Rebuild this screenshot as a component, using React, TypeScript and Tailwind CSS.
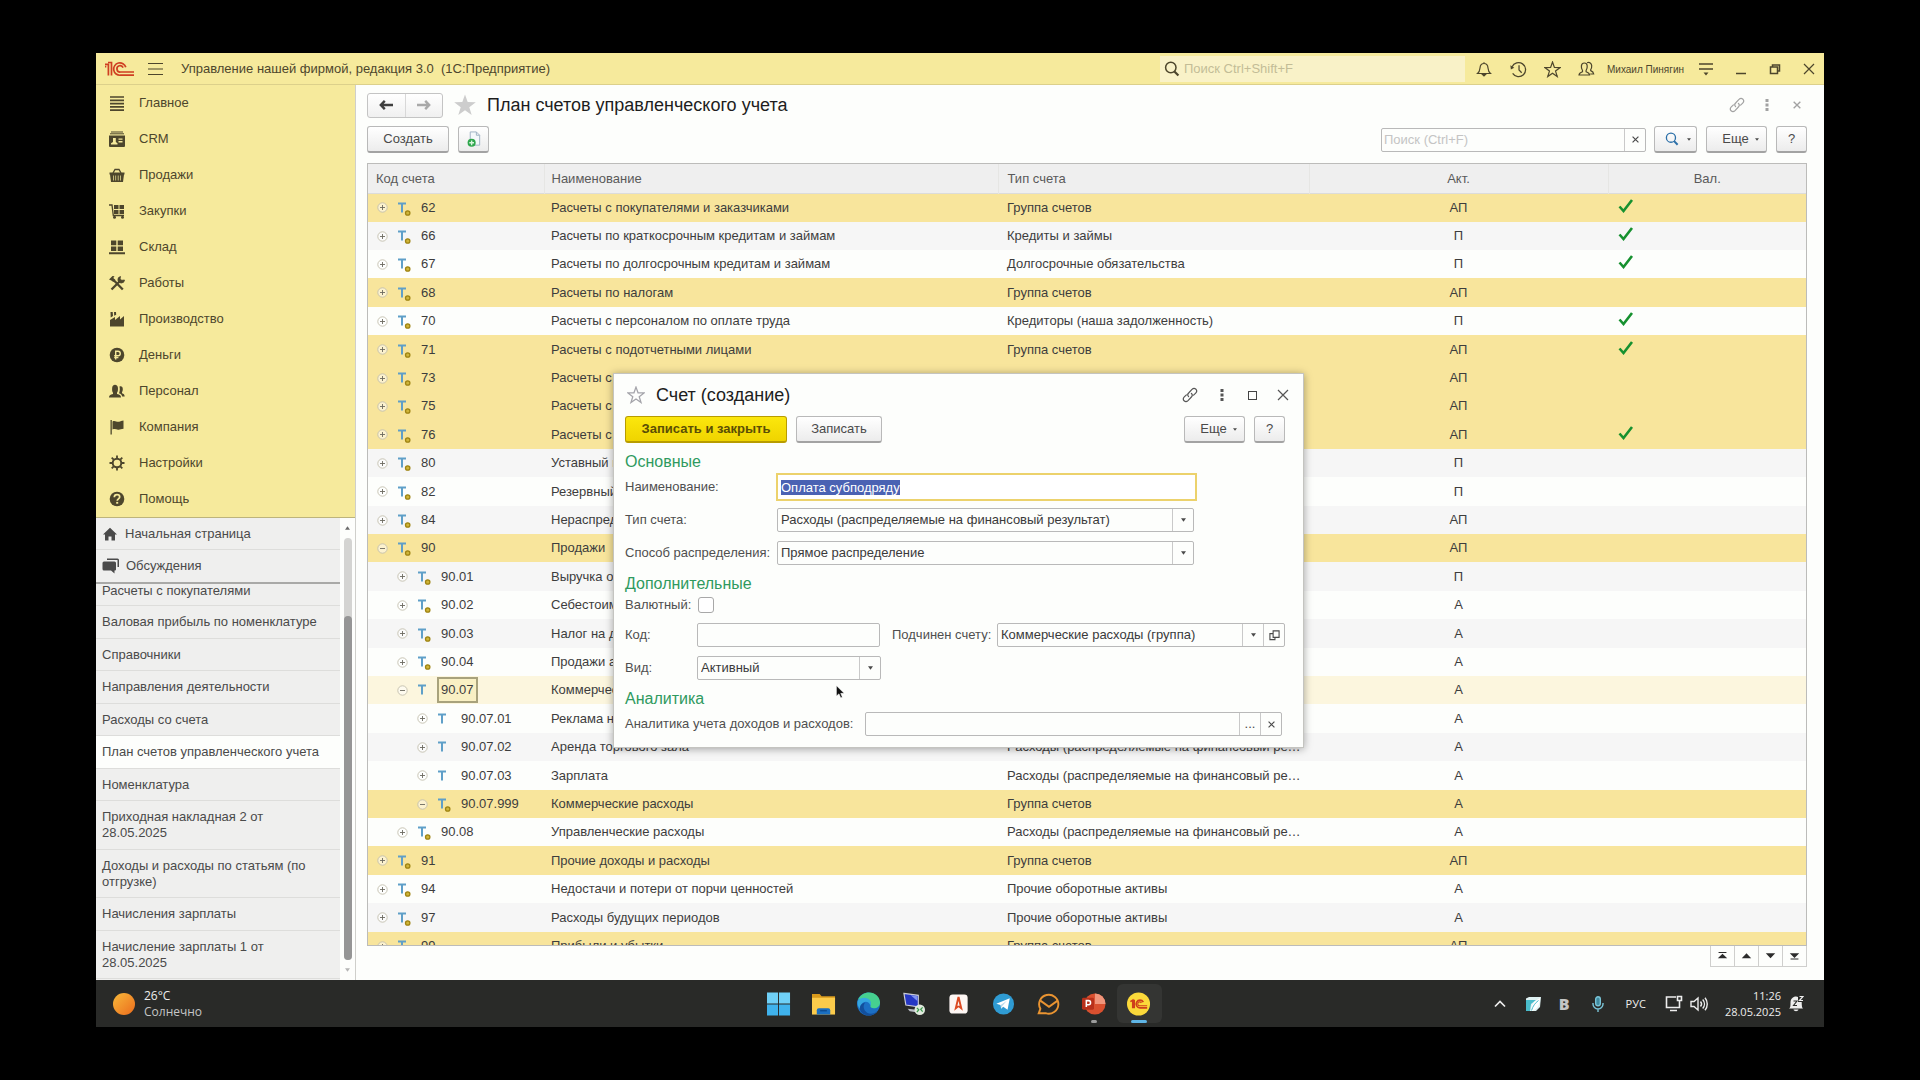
import { useEffect, useRef } from "react";
import type { ReactNode } from "react";

type IconProps = { className?: string };

/* ---------- shared drawings ---------- */

const Logo1C = ({ className }: IconProps) => (
  <svg viewBox="0 0 30 16" className={className} fill="none" stroke="currentColor" strokeWidth="1.7">
    <path d="M.5 3.400H3.900V14.500M.5 5.600H1.800V5.600M3.500 1.500H7V14.500" />
    <path d="M21.300 6.200A6.200 6.200 0 1 0 16 14.200H29.500" />
    <path d="M18.600 6.600A3.200 3.200 0 1 0 16 11H29.500" />
  </svg>
);

const Burger = ({ className }: IconProps) => (
  <svg viewBox="0 0 16 14" className={className} stroke="currentColor" strokeWidth="1.2">
    <path d="M0 1.5h15M0 7h15M0 12.5h15" />
  </svg>
);

const Magnifier = ({ className }: IconProps) => (
  <svg viewBox="0 0 16 16" className={className} fill="none" stroke="currentColor" strokeWidth="1.5">
    <circle cx="6.8" cy="6.5" r="5.2" />
    <path d="m10.4 10.4 4 4.2" strokeWidth="2.2" />
  </svg>
);

const LinkIcon = ({ className }: IconProps) => (
  <svg viewBox="0 0 16 16" className={className} fill="none" stroke="currentColor" strokeWidth="1.2" strokeLinecap="round">
    <path d="M6.6 9.6C5.4 8.4 5.6 7 6.6 6L10 2.4c1.2-1.2 2.8-1.2 3.9-.2 1 1.1 1 2.7-.2 3.9L11.6 8.2" />
    <path d="M9.4 6.4c1.2 1.2 1 2.6 0 3.6L6 13.6c-1.2 1.2-2.800 1.200-3.900.2-1-1.100-1-2.700.2-3.900L4.400 7.800" />
  </svg>
);

const Dots = ({ className }: IconProps) => (
  <svg viewBox="0 0 4 14" className={className} fill="currentColor">
    <rect x="0.5" y="1" width="3" height="3" />
    <rect x="0.5" y="5.5" width="3" height="3" />
    <rect x="0.5" y="10" width="3" height="3" />
  </svg>
);

const Cross = ({ className }: IconProps) => (
  <svg viewBox="0 0 12 12" className={className} stroke="currentColor" strokeWidth="1.2">
    <path d="m1 1 10 10M11 1 1 11" />
  </svg>
);

const StarShape = ({ className, filled }: IconProps & { filled?: boolean }) => (
  <svg viewBox="0 0 24 24" className={className} fill={filled ? "currentColor" : "none"} stroke="currentColor" strokeWidth={filled ? 0 : 1.7}>
    <path d="m12 1.500 2.700 7.600 8.100.2-6.500 4.900 2.400 7.800L12 17.300l-6.700 4.700 2.400-7.800L1.200 9.300l8.100-.2z" />
  </svg>
);

const Caret = ({ className }: IconProps) => (
  <svg viewBox="0 0 6 4" className={className} fill="currentColor">
    <path d="M0 0h6L3 4z" />
  </svg>
);

const Arrow = ({ className }: IconProps) => (
  <svg viewBox="0 0 14 10" className={className} fill="none" stroke="currentColor" strokeWidth="2.4">
    <path d="M2 5H14M5.8.8 1.800 5l4 4.200" />
  </svg>
);

/* ---------- section icons ---------- */

const sectionIcons: Record<string, ReactNode> = {
  main: <path d="M1 2h14M1 5.300h14M1 8.600h14M1 11.900h14M1 15.200h14" stroke="currentColor" strokeWidth="1.7" />,
  crm: (
    <>
      <path d="M2 1h12M1 2.800h14" stroke="currentColor" strokeWidth="1" />
      <path fillRule="evenodd" d="M0 4.500h16V15a1 1 0 0 1-1 1H1a1 1 0 0 1-1-1zM2 13.500h6.500v-1.300L6.800 11V7h-2.800V11L2 12.200zM9.500 7.500v1.300h4V7.500zm0 2.600v1.300h4v-1.300z" />
    </>
  ),
  sales: (
    <>
      <path d="M4 6 6 2.500h4L12 6" fill="none" stroke="currentColor" strokeWidth="1.3" />
      <path fillRule="evenodd" d="M.5 5.500h15v2H15l-1 7.500H2L1 7.500H.5zM4 8.500v5h.7v-5zm2.400 0v5h.7v-5zm2.400 0v5h.7v-5zm2.400 0v5h.7v-5z" />
    </>
  ),
  purchases: (
    <>
      <path d="M0 2h3l1.300 10.500H15" fill="none" stroke="currentColor" strokeWidth="1.3" />
      <path d="M5 2h4.500v4H5zM10.500 2H15v4h-4.500zM5 7h4.500v4H5zM10.500 7H15v4h-4.500z" />
      <circle cx="5.5" cy="14.3" r="1.5" />
      <circle cx="13.5" cy="14.3" r="1.5" />
    </>
  ),
  stock: <path d="M2 1.500h5.300v4.800H2zM8.700 1.500H14v4.800H8.700zM2 7.500h5.300v4.500H2zM8.700 7.500H14v4.500H8.700zM0 13.300h16v2H0z" />,
  works: (
    <>
      <path d="m2.500 14.500 8-8M13.800 14.500 4.500 5" fill="none" stroke="currentColor" strokeWidth="2.3" />
      <path d="M0 4.500 3.500 1l2 .2L4.300 3l2.200 2-2.200 2-2-1.500z" />
      <path d="M15.500 5a3.300 3.300 0 1 1-4-3.500L11 4l1.800 1.300z" stroke="currentColor" strokeWidth="0.8" />
    </>
  ),
  production: <path d="M1 15.500V9l5-3v3l5-4v3.500l4-3.500v10.500zM1.500 1h2.200l.3 4-2.300 1.500zM5 1h2l.2 2.800-2 1z" />,
  money: (
    <>
      <circle cx="8" cy="8" r="7.3" />
      <path d="M6.700 12.500v-8.300h2.300a2.200 2.200 0 0 1 0 4.500H5.200M5.200 10.600h4.200" fill="none" stroke="#f6ea9c" strokeWidth="1.4" />
    </>
  ),
  people: (
    <>
      <path d="M0 14.500c0-2 1-2.700 4-3.500V9.800C3 8.500 3 6.500 3.200 4.500 3.500 2.500 4.600 1.700 6 1.700s2.600.8 2.900 2.800c.2 2 .1 4-.9 5.300V11c3 .8 4 1.500 4 3.500z" />
      <path d="M10.500 3.500c1.800-.8 3.300.2 3.300 2.500 0 1.500-.3 2.500-.8 3.200v1c1.700.6 2.500 1.300 2.700 3.300h-2.500c-.3-1.700-1.200-2.700-3.200-3.300.8-1.500 1.100-4.200.5-6.700z" />
    </>
  ),
  company: <path d="M1.500 1h1.300v14.500H1.500zM3.500 2.500C6 1 7.500 3.300 10 2.700c1.500-.2 2.500-1 4.500-1.200v8.300c-2.500 0-3.500 1.200-5.500.9-2-.4-3.300-1.300-5.500-.2z" />,
  settings: (
    <>
      <circle cx="8" cy="8" r="4.3" fill="none" stroke="currentColor" strokeWidth="2" />
      <path d="M8 .5v3M8 12.500v3M.5 8h3M12.500 8h3M2.700 2.700l2 2M11.300 11.300l2 2M13.300 2.700l-2 2M4.700 11.300l-2 2" stroke="currentColor" strokeWidth="1.8" />
    </>
  ),
  help: (
    <>
      <circle cx="8" cy="8" r="7.3" />
      <path d="M5.300 6.200C5.300 4.500 6.500 3.700 8 3.700s2.700.9 2.700 2.300c0 1.800-2.500 1.900-2.500 3.700" fill="none" stroke="#f6ea9c" strokeWidth="1.7" />
      <path d="M7.200 10.900h2v1.800h-2z" fill="#f6ea9c" />
    </>
  ),
};

const sections: [string, string][] = [
  ["main", "Главное"],
  ["crm", "CRM"],
  ["sales", "Продажи"],
  ["purchases", "Закупки"],
  ["stock", "Склад"],
  ["works", "Работы"],
  ["production", "Производство"],
  ["money", "Деньги"],
  ["people", "Персонал"],
  ["company", "Компания"],
  ["settings", "Настройки"],
  ["help", "Помощь"],
];

const openPages = [
  "Валовая прибыль по номенклатуре",
  "Справочники",
  "Направления деятельности",
  "Расходы со счета",
  "План счетов управленческого учета",
  "Номенклатура",
  "Приходная накладная 2 от 28.05.2025",
  "Доходы и расходы по статьям (по отгрузке)",
  "Начисления зарплаты",
  "Начисление зарплаты 1 от 28.05.2025",
];

/* ---------- accounts ---------- */

type Account = {
  code: string;
  name: string;
  type: string;
  act: string;
  level?: 1 | 2;
  group?: boolean;
  currency?: boolean;
  open?: boolean;
  custom?: boolean;
};

const GROUP = "Группа счетов";
const COSTS = "Расходы (распределяемые на финансовый результат)";

const accounts: Account[] = [
  { code: "62", name: "Расчеты с покупателями и заказчиками", type: GROUP, act: "АП", group: true, currency: true },
  { code: "66", name: "Расчеты по краткосрочным кредитам и займам", type: "Кредиты и займы", act: "П", currency: true },
  { code: "67", name: "Расчеты по долгосрочным кредитам и займам", type: "Долгосрочные обязательства", act: "П", currency: true },
  { code: "68", name: "Расчеты по налогам", type: GROUP, act: "АП", group: true },
  { code: "70", name: "Расчеты с персоналом по оплате труда", type: "Кредиторы (наша задолженность)", act: "П", currency: true },
  { code: "71", name: "Расчеты с подотчетными лицами", type: GROUP, act: "АП", group: true, currency: true },
  { code: "73", name: "Расчеты с персоналом", type: GROUP, act: "АП", group: true },
  { code: "75", name: "Расчеты с учредителями", type: GROUP, act: "АП", group: true },
  { code: "76", name: "Расчеты с дебиторами", type: GROUP, act: "АП", group: true, currency: true },
  { code: "80", name: "Уставный капитал", type: "Капитал", act: "П" },
  { code: "82", name: "Резервный капитал", type: "Капитал", act: "П" },
  { code: "84", name: "Нераспределенная прибыль", type: "Капитал", act: "АП" },
  { code: "90", name: "Продажи", type: GROUP, act: "АП", group: true, open: true },
  { code: "90.01", name: "Выручка от продаж", type: "Доходы", act: "П", level: 1 },
  { code: "90.02", name: "Себестоимость", type: "Расходы", act: "А", level: 1 },
  { code: "90.03", name: "Налог на доходы", type: "Расходы", act: "А", level: 1 },
  { code: "90.04", name: "Продажи акций", type: "Расходы", act: "А", level: 1 },
  { code: "90.07", name: "Коммерческие расходы", type: GROUP, act: "А", level: 1, open: true, custom: true },
  { code: "90.07.01", name: "Реклама н", type: COSTS, act: "А", level: 2, custom: true },
  { code: "90.07.02", name: "Аренда торгового зала", type: COSTS, act: "А", level: 2, custom: true },
  { code: "90.07.03", name: "Зарплата", type: COSTS, act: "А", level: 2, custom: true },
  { code: "90.07.999", name: "Коммерческие расходы", type: GROUP, act: "А", level: 2, group: true, open: true },
  { code: "90.08", name: "Управленческие расходы", type: COSTS, act: "А", level: 1 },
  { code: "91", name: "Прочие доходы и расходы", type: GROUP, act: "АП", group: true },
  { code: "94", name: "Недостачи и потери от порчи ценностей", type: "Прочие оборотные активы", act: "А" },
  { code: "97", name: "Расходы будущих периодов", type: "Прочие оборотные активы", act: "А" },
  { code: "99", name: "Прибыли и убытки", type: GROUP, act: "АП", group: true },
];

const SELECTED = "90.07";

const rowColor = (a: Account, i: number) => {
  if (a.code === SELECTED) return "bg-[#fcf6de]";
  if (a.group) return "bg-[#f8e59c]";
  return i % 2 ? "bg-[#f6f6f6]" : "bg-[#fdfefc]";
};

const indent = (level?: 1 | 2) => (level === 2 ? "pl-[49px]" : level === 1 ? "pl-[29px]" : "pl-[9px]");

const Toggle = ({ open }: { open?: boolean }) => (
  <svg viewBox="0 0 11 11" className="size-[11px] shrink-0" fill="#ffffff80" stroke="#c3bfae" strokeWidth="0.9">
    <circle cx="5.5" cy="5.5" r="4.7" />
    <path d={open ? "M3 5.500h5" : "M3 5.500h5M5.500 3v5"} stroke="#6c6a60" />
  </svg>
);

const AccountMark = ({ custom }: { custom?: boolean }) => (
  <svg viewBox="0 0 14 16" className="ml-[10px] h-4 w-3.5 shrink-0" fill="none">
    <path d="M0 3.500h8M4 3.500V12.500" stroke="#5f9fc8" strokeWidth="2" />
    {!custom && <circle cx="9.7" cy="13" r="2.2" fill="#d0b53a" stroke="#9f8412" strokeWidth="1.3" />}
  </svg>
);

/* ---------- controls ---------- */

const buttonBase =
  "flex items-center justify-center rounded-[3px] border border-[#b9b9b9] border-b-2 border-b-[#a3a3a3] bg-linear-to-b from-white to-[#ececec] text-[#4a4a4a]";

const Button = ({ className = "", label, children }: { className?: string; label?: string; children: ReactNode }) => (
  <button type="button" aria-label={label} className={`${buttonBase} ${className}`}>
    {children}
  </button>
);

const fieldBox = "flex h-6 rounded-[2px] border border-[#b9b9b9] bg-[#fdfefc]";
const addon = "flex w-[21px] shrink-0 items-center justify-center border-l border-[#c9c9c9] text-[#4a4a4a]";

const SelectField = ({ id, value, className = "", extra }: { id: string; value: string; className?: string; extra?: ReactNode }) => (
  <div className={`${fieldBox} ${className}`}>
    <select id={id} defaultValue={value} className="min-w-0 flex-1 appearance-none bg-transparent pl-[3px] text-[#3a3a3a] outline-none">
      <option>{value}</option>
    </select>
    <span className={addon}>
      <Caret className="h-1 w-[5px]" />
    </span>
    {extra}
  </div>
);

/* ---------- page parts ---------- */

const TitleBar = () => (
  <header className="flex h-8 shrink-0 items-center border-b border-[#dcd08b] bg-[#f6ea9c] pt-px text-[#4d462c]">
    <Logo1C className="ml-2 h-4 w-[31px] text-[#cf3f22]" />
    <button type="button" aria-label="Меню" className="ml-[13px]">
      <Burger className="h-3.5 w-4" />
    </button>
    <h1 className="ml-[17px] text-[13px] whitespace-pre">Управление нашей фирмой, редакция 3.0  (1С:Предприятие)</h1>
    <label className="ml-auto flex h-[26px] w-[305px] items-center bg-[#f9f2c8] pl-1">
      <Magnifier className="size-4 shrink-0" />
      <input aria-label="Поиск" placeholder="Поиск Ctrl+Shift+F" className="ml-1 min-w-0 flex-1 bg-transparent text-[13px] outline-none placeholder:text-[#c3bd97]" />
    </label>
    <div className="ml-[11px] flex items-center">
      <button type="button" aria-label="Уведомления">
        <svg viewBox="0 0 16 16" className="size-4" fill="none" stroke="currentColor" strokeWidth="1.2">
          <path d="M8 1.300V2.500M1.500 12.500h13c-2-1.500-2.300-3-2.500-5.500C11.800 4 10.300 2.500 8 2.500S4.200 4 4 7c-.2 2.500-.5 4-2.500 5.500z" />
          <path d="M6.300 13.300h3.400L8 15z" fill="currentColor" />
        </svg>
      </button>
      <button type="button" aria-label="История" className="ml-[18px]">
        <svg viewBox="0 0 16 16" className="size-[17px]" fill="none" stroke="currentColor" strokeWidth="1.2">
          <path d="M2 5.500A6.600 6.600 0 1 1 2.500 11.700M8.500 4v4.500L11 11" />
          <path d="M.3 4 4 6.300.8 8z" fill="currentColor" stroke="none" />
        </svg>
      </button>
      <button type="button" aria-label="Избранное" className="ml-[17px]">
        <StarShape className="size-[17px]" />
      </button>
      <button type="button" aria-label="Пользователь" className="ml-[17px] flex items-center gap-3 text-[10px]">
        <svg viewBox="0 0 17 16" className="h-4 w-[17px]" fill="none" stroke="currentColor" strokeWidth="1.2">
          <path d="M1 14c.2-2 1.500-2.500 3.500-3.200V9.500C3.500 8 3.200 6.500 3.400 4.800 3.700 3 4.700 2 6.300 2s2.700 1 2.900 2.800c.2 1.700-.1 3.200-1.100 4.700v1.300c2 .7 3.300 1.200 3.500 3.200z" />
          <path d="M9 1.800c2.600-1 4.500.3 4.700 2.800.1 1.700-.2 3-1 4v1c1.800.7 2.800 1.400 3 3.400h-3.500" />
        </svg>
        Михаил Пинягин
      </button>
      <button type="button" aria-label="Настройка панели" className="ml-3.5">
        <svg viewBox="0 0 16 16" className="size-4" stroke="currentColor" strokeWidth="1.3">
          <path d="M1 3h14M1 8h14" />
          <path d="M5.500 11.500h5L8 14.500z" fill="currentColor" stroke="none" />
        </svg>
      </button>
      <button type="button" aria-label="Свернуть" className="ml-[22px]">
        <svg viewBox="0 0 10 12" className="h-3 w-2.5" stroke="currentColor" strokeWidth="1.5">
          <path d="M0 10.500h10" />
        </svg>
      </button>
      <button type="button" aria-label="Развернуть" className="ml-[23px]">
        <svg viewBox="0 0 12 12" className="size-3" fill="none" stroke="currentColor" strokeWidth="1.5">
          <path d="M3.500 4V2h7v6H8.500M1.500 4h7v6.500h-7z" />
        </svg>
      </button>
      <button type="button" aria-label="Закрыть" className="mr-[9px] ml-[22px]">
        <Cross className="size-3" />
      </button>
    </div>
  </header>
);

const Sidebar = () => (
  <aside className="flex w-[260px] shrink-0 flex-col border-r border-[#cfcfcb] bg-[#fdfefc]">
    <nav aria-label="Разделы" className="bg-[#f6ea9c] text-[#4d462c]">
      {sections.map(([icon, label]) => (
        <a key={icon} href="#" className="flex h-9 items-center gap-[14px] pl-[13px] text-[13px]">
          <svg viewBox="0 0 16 16" className="size-4" fill="currentColor">
            {sectionIcons[icon]}
          </svg>
          {label}
        </a>
      ))}
    </nav>
    <div className="flex min-h-0 flex-1 border-t border-[#bdb47c] text-[13px] text-[#4a4a4a]">
      <nav aria-label="Открытые страницы" className="flex min-h-0 flex-1 flex-col bg-[#efefee]">
        <a href="#" className="flex h-8 shrink-0 items-center gap-2 border-b border-[#dddddb] pl-[7px]">
          <svg viewBox="0 0 14 14" className="size-3.5" fill="currentColor">
            <path d="M7 .8 14 7.500h-2V13.500H8.500V9.500h-3v4H2V7.500H0z" />
          </svg>
          Начальная страница
        </a>
        <a href="#" className="flex h-[34px] shrink-0 items-center gap-1.5 border-b-2 border-[#a9a9a7] pl-[6px]">
          <svg viewBox="0 0 18 16" className="h-4 w-[18px]" fill="currentColor">
            <path d="M5 .5h10.500a1.500 1.500 0 0 1 1.500 1.500v7h-1.500V2H5z" />
            <path d="M2 3.500h10.500A1.500 1.500 0 0 1 14 5v6.500a1 1 0 0 1-1 1h-.5V15.500l-3.500-3H2a1.500 1.500 0 0 1-1.500-1.500V5A1.500 1.500 0 0 1 2 3.500z" />
          </svg>
          Обсуждения
        </a>
        <div className="min-h-0 flex-1 overflow-hidden leading-4">
          <a href="#" className="block h-[22px] border-b border-[#dddddb] pl-[6px] leading-3.5">
            Расчеты с покупателями
          </a>
          {openPages.map((page) => (
            <a
              key={page}
              href="#"
              className={`block border-b border-[#dddddb] py-2 pr-3 pl-[6px] odd:pb-[7px] ${
                page === "План счетов управленческого учета" ? "bg-[#fdfefc]" : ""
              }`}
            >
              {page}
            </a>
          ))}
        </div>
      </nav>
      <div className="flex w-[15px] flex-col items-center justify-between py-2 text-[#6a6a6a]">
        <Caret className="h-1 w-[5px] rotate-180" />
        <div className="mt-2 flex w-2 flex-1 flex-col rounded-full bg-[#d4d4d2] pt-[78px]">
          <div className="flex-1 rounded-full bg-[#959595]" />
        </div>
        <Caret className="mt-2 h-1 w-[5px] text-[#b5b5b5]" />
      </div>
    </div>
  </aside>
);

const headCell = "border-r border-[#e6e6e4] font-normal";

const AccountsTable = () => (
  <div className="min-h-0 flex-1 overflow-hidden border border-[#bcbcba]">
    <table className="w-full table-fixed border-collapse text-[13px] text-[#3d3d3d]">
      <colgroup>
        <col className="w-[176px]" />
        <col />
        <col className="w-[311px]" />
        <col className="w-[299px]" />
        <col className="w-[198px]" />
      </colgroup>
      <thead>
        <tr className="h-[29px] border-b border-[#dcdcda] bg-[#efefef] text-left text-[#5a5a5a]">
          <th className={`${headCell} pl-2`}>Код счета</th>
          <th className={`${headCell} pl-[7px]`}>Наименование</th>
          <th className={`${headCell} pl-[9px]`}>Тип счета</th>
          <th className={`${headCell} text-center`}>Акт.</th>
          <th className="text-center font-normal">Вал.</th>
        </tr>
      </thead>
      <tbody>
        {accounts.map((a, i) => (
          <tr key={a.code} className={`h-7 nth-[5n+1]:h-[29px] nth-[5n+4]:h-[29px] ${rowColor(a, i)}`}>
            <td className="p-0">
              <div className={`flex items-center ${indent(a.level)}`}>
                <Toggle open={a.open} />
                <AccountMark custom={a.custom} />
                {a.code === SELECTED ? (
                  <span className="ml-[5px] flex h-[26px] items-center border-2 border-[#a8a27c] bg-[#f9f0c4] px-[2px]">{a.code}</span>
                ) : (
                  <span className="ml-[9px]">{a.code}</span>
                )}
              </div>
            </td>
            <td className="truncate py-0 pr-2 pl-[7px]">{a.name}</td>
            <td className="truncate py-0 pr-2 pl-[9px]">{a.type}</td>
            <td className="p-0 text-center">{a.act}</td>
            <td className="p-0">
              {a.currency && (
                <svg viewBox="0 0 16 14" className="mb-1 ml-[10px] h-3.5 w-4" fill="none" stroke="#16912f" strokeWidth="2.6">
                  <path d="m1.500 7.500 4 4.500L14 1" />
                </svg>
              )}
            </td>
          </tr>
        ))}
      </tbody>
    </table>
  </div>
);

const navPaths: [string, string][] = [
  ["В начало", "M2 0h10v1.200H2zM7 2l6 6H1z"],
  ["Вверх", "M7 1.500 13 8H1z"],
  ["Вниз", "M1 1.500h12L7 8z"],
  ["В конец", "M1 1.500h12L7 7.500zM2 8.300h10v1.200H2z"],
];

const heading = "text-base leading-5 text-[#2f9a5f]";

const AccountDialog = () => {
  const nameRef = useRef<HTMLInputElement>(null);
  useEffect(() => {
    nameRef.current?.focus();
    nameRef.current?.select();
  }, []);

  return (
    <section
      role="dialog"
      aria-labelledby="dialog-title"
      className="absolute top-[288px] left-[257px] w-[691px] border border-[#c4c4c0] bg-[#fdfefc] pb-[11px] pl-[11px] text-[13px] text-[#4f4f4f] shadow-[0_1px_8px_rgba(0,0,0,0.35)]"
    >
      <div className="flex h-[42px] items-center pr-[14px] text-[#555]">
        <StarShape className="ml-0.5 size-[18px] text-[#a4a4aa]" />
        <h2 id="dialog-title" className="ml-[11px] text-lg text-[#1d1d1d]">
          Счет (создание)
        </h2>
        <button type="button" aria-label="Ссылка" className="ml-auto">
          <LinkIcon className="size-4" />
        </button>
        <button type="button" aria-label="Действия" className="ml-[22px]">
          <Dots className="h-3.5 w-1" />
        </button>
        <button type="button" aria-label="Развернуть" className="ml-6 size-[9px] border border-[#444]" />
        <button type="button" aria-label="Закрыть" className="ml-5">
          <Cross className="size-3" />
        </button>
      </div>
      <div className="flex gap-[9px] pr-[18px]">
        <button
          type="button"
          className="flex h-[27px] w-[162px] items-center justify-center rounded-[3px] border border-b-2 border-[#b89c00] bg-linear-to-b from-[#fbe70d] to-[#efd400] font-bold text-[#5a4e05]"
        >
          Записать и закрыть
        </button>
        <Button className="h-[27px] w-[86px]">Записать</Button>
        <Button className="ml-auto h-[27px] w-[61px] gap-1.5 pl-2">
          Еще <Caret className="h-[3px] w-1" />
        </Button>
        <Button className="h-[27px] w-[31px]">?</Button>
      </div>

      <h3 className={`mt-[9px] ${heading}`}>Основные</h3>
      <div className="mt-px flex items-center">
        <label htmlFor="f-name" className="w-[151px]">
          Наименование:
        </label>
        <input
          ref={nameRef}
          id="f-name"
          defaultValue="Оплата субподряду"
          className="h-7 w-[421px] border-2 border-[#ecd26c] bg-white pl-[3px] text-[#3a3a3a] outline-none selection:bg-[#4a62b3] selection:text-white"
        />
      </div>
      <div className="mt-[7px] flex items-center">
        <label htmlFor="f-type" className="w-[152px]">
          Тип счета:
        </label>
        <SelectField id="f-type" value="Расходы (распределяемые на финансовый результат)" className="w-[417px]" />
      </div>
      <div className="mt-[9px] flex items-center">
        <label htmlFor="f-method" className="w-[152px]">
          Способ распределения:
        </label>
        <SelectField id="f-method" value="Прямое распределение" className="w-[417px]" />
      </div>

      <h3 className={`mt-[9px] ${heading}`}>Дополнительные</h3>
      <div className="mt-[3px] flex h-4 items-center">
        <label htmlFor="f-cur" className="w-[73px]">
          Валютный:
        </label>
        <input id="f-cur" type="checkbox" className="size-4 appearance-none rounded-[3px] border border-[#a8a8a8] bg-white" />
      </div>
      <div className="mt-[10px] flex items-center">
        <label htmlFor="f-code" className="w-[72px]">
          Код:
        </label>
        <input id="f-code" className="h-6 w-[183px] rounded-[2px] border border-[#b9b9b9] bg-[#fdfefc] px-1 outline-none" />
        <label htmlFor="f-parent" className="ml-3 w-[105px] whitespace-nowrap">
          Подчинен счету:
        </label>
        <SelectField
          id="f-parent"
          value="Коммерческие расходы (группа)"
          className="w-[288px]"
          extra={
            <button type="button" aria-label="Открыть" className={addon}>
              <svg viewBox="0 0 12 12" className="size-[11px]" fill="none" stroke="currentColor" strokeWidth="1.2">
                <path d="M4.500 1h6.500v7H4.500zM4.500 4H1v6.500h5.500V8" />
              </svg>
            </button>
          }
        />
      </div>
      <div className="mt-[9px] flex items-center">
        <label htmlFor="f-kind" className="w-[72px]">
          Вид:
        </label>
        <SelectField id="f-kind" value="Активный" className="w-[184px]" />
      </div>

      <h3 className={`mt-[9px] ${heading}`}>Аналитика</h3>
      <div className="mt-[3px] flex items-center">
        <label htmlFor="f-analytics" className="w-[240px]">
          Аналитика учета доходов и расходов:
        </label>
        <div className={`${fieldBox} w-[417px]`}>
          <input id="f-analytics" className="min-w-0 flex-1 bg-transparent px-1 outline-none" />
          <button type="button" aria-label="Выбрать" className={addon}>
            ...
          </button>
          <button type="button" aria-label="Очистить" className={addon}>
            <Cross className="size-[7px] stroke-2" />
          </button>
        </div>
      </div>

      <svg viewBox="0 0 10 15" className="absolute top-[311px] left-[222px] h-[14px] w-[9px]">
        <path d="M.5.5V12L3.300 9.500 5.300 14 7 13.200 5.200 9H9z" fill="#111" stroke="#fff" strokeWidth="0.5" />
      </svg>
    </section>
  );
};

const Workspace = () => (
  <main className="relative flex min-w-0 flex-1 flex-col bg-[#fdfefc] pt-2 pr-[17px] pb-[13px] pl-[11px]">
    <div className="flex h-6 items-center">
      <div className="flex h-[25px] w-[76px] rounded-[3px] border border-[#c4c4c4] bg-linear-to-b from-white to-[#f0f0f0]">
        <button type="button" aria-label="Назад" className="flex flex-1 items-center justify-center border-r border-[#d8d8d8] text-[#3f3f3f]">
          <Arrow className="h-2.5 w-3.5" />
        </button>
        <button type="button" aria-label="Вперед" className="flex flex-1 items-center justify-center text-[#a9a9a9]">
          <Arrow className="h-2.5 w-3.5 rotate-180" />
        </button>
      </div>
      <StarShape filled className="ml-[10px] size-6 text-[#cdcdcd]" />
      <h2 className="ml-[10px] text-lg text-[#1d1d1d]">План счетов управленческого учета</h2>
      <div className="mr-1.5 ml-auto flex items-center text-[#a2a2a2]">
        <button type="button" aria-label="Ссылка">
          <LinkIcon className="size-4" />
        </button>
        <button type="button" aria-label="Действия" className="ml-5">
          <Dots className="h-3.5 w-1" />
        </button>
        <button type="button" aria-label="Закрыть" className="ml-6">
          <Cross className="size-2 stroke-2" />
        </button>
      </div>
    </div>
    <div className="mt-[9px] flex h-[27px] items-center text-[13px]">
      <Button className="h-[27px] w-[82px]">Создать</Button>
      <Button label="Создать копированием" className="ml-[9px] h-[27px] w-[31px]">
        <svg viewBox="0 0 16 18" className="h-[17px] w-4" fill="none">
          <path d="M4 1h6.500L14 4.500V15H4z" fill="#f4f8fb" stroke="#9cb0c2" />
          <path d="M10.500 1v3.500H14" stroke="#9cb0c2" />
          <circle cx="5.5" cy="12.5" r="4.3" fill="#2ea64c" />
          <path d="M5.500 10v5M3 12.500h5" stroke="#d9f5df" strokeWidth="1.5" />
        </svg>
      </Button>
      <div className={`${fieldBox} ml-auto w-[265px]`}>
        <input aria-label="Поиск в списке" placeholder="Поиск (Ctrl+F)" className="min-w-0 flex-1 bg-transparent pl-[2px] outline-none placeholder:text-[#c4c4c4]" />
        <button type="button" aria-label="Очистить поиск" className={addon}>
          <Cross className="size-[7px] stroke-2" />
        </button>
      </div>
      <Button label="Найти" className="ml-2 h-[27px] w-[43px] gap-2 pl-1">
        <Magnifier className="size-3.5 text-[#2b6fa8]" />
        <Caret className="h-[3px] w-1" />
      </Button>
      <Button className="ml-[9px] h-[27px] w-[61px] gap-1.5 pl-2">
        Еще <Caret className="h-[3px] w-1" />
      </Button>
      <Button className="ml-[9px] h-[27px] w-[31px]">?</Button>
    </div>
    <div className="mt-[10px] flex min-h-0 flex-1 flex-col">
      <AccountsTable />
    </div>
    <div className="flex h-[21px] self-end border-r border-b border-[#cfcfcd]">
      {navPaths.map(([label, d]) => (
        <button key={label} type="button" aria-label={label} className="flex w-6 items-center justify-center border-l border-[#cfcfcd] text-[#2c2c2c]">
          <svg viewBox="0 0 14 10" className="h-2 w-[11px]" fill="currentColor">
            <path d={d} />
          </svg>
        </button>
      ))}
    </div>
    <AccountDialog />
  </main>
);

/* ---------- taskbar ---------- */

const apps: { label: string; icon: ReactNode; mark?: "running" | "active" }[] = [
  {
    label: "Пуск",
    icon: (
      <>
        <path d="M0 0h11.500v11.500H0zM12.500 0H24v11.500H12.500z" fill="#6fd0f7" />
        <path d="M0 12.500h11.500V24H0zM12.500 12.500H24V24H12.500z" fill="#3fb2ec" />
      </>
    ),
  },
  {
    label: "Проводник",
    icon: (
      <>
        <path d="M0 1.500h8l2 2.500h14v4H0z" fill="#d99a1c" />
        <path d="M0 5.500h24V23H0z" fill="#fbcb4b" />
        <path d="M5 23v-4.500a2 2 0 0 1 2-2h10a2 2 0 0 1 2 2V23z" fill="#1b6fc0" />
        <path d="M8.500 19h7" stroke="#0d4d92" strokeWidth="1.5" />
      </>
    ),
  },
  {
    label: "Edge",
    icon: (
      <>
        <circle cx="12" cy="12" r="12" fill="#1c6fc4" />
        <path d="M1 7.500C3.500 2.500 8 0 12.500 0 19 0 24 5 24 10.500c0 4-3 6-6.500 6-2.500 0-4-1-3.500-2.300 1.500-3-.5-6.700-5-7.200-3.500-.4-6 0-8 .5z" fill="#46cf8f" />
        <path d="M.7 8.500C4 4.500 11 4.500 13.500 8.200c1.500 2.300 1.200 4.300.5 5.800-.8-3-3-4.500-5.500-4.200C5 10.300 3 13.500 3.500 17.500 1 15 0 12 .7 8.500z" fill="#35a7e0" />
        <path d="M8.500 10.500c-2.500 3-2 8 2 10.500 3.500 2 8 1 10.500-1.500-1 2-4.500 4.500-9 4.500C7 24 3 20.500 3 16.500c0-3 2.500-5.500 5.500-6z" fill="#134f9c" />
      </>
    ),
  },
  {
    label: "Удаленный рабочий стол",
    icon: (
      <>
        <path d="m2 1 15 2v12L4 13z" fill="#2537c4" stroke="#c9cbd6" strokeWidth="1.2" />
        <path d="m9 3 7 1v5z" fill="#7f93f2" />
        <path d="m6 17 9 1v2.500l-7-1z" fill="#b9bcc4" />
        <circle cx="18.5" cy="18" r="5.5" fill="#dfe9dc" />
        <path d="m15.500 16 2 2-2 2.500M21.500 15.500l-2 2 2 2.500" fill="none" stroke="#3c9a4d" strokeWidth="1.3" />
      </>
    ),
  },
  {
    label: "Ассистент",
    icon: (
      <>
        <rect x="2.5" y="2" width="19" height="20" rx="3.5" fill="#fdf6f3" />
        <path fillRule="evenodd" d="M11 4.500h2L16.500 19 12 15.500 7.500 19zM12 9l-1.200 4.700h2.400z" fill="#dc4a22" />
      </>
    ),
  },
  {
    label: "Telegram",
    icon: (
      <>
        <circle cx="12" cy="12" r="11" fill="#2f9bd3" />
        <path d="M4.500 11.800 18.500 6l-2.300 12-4.500-3.200-2.200 2.200-.6-4z" fill="#fff" />
        <path d="m9 13 6.500-4.500-4.800 5.500-.7 2.500z" fill="#b7d9ec" />
      </>
    ),
  },
  {
    label: "Почта",
    icon: (
      <g fill="none" stroke="#ea9431" strokeWidth="2">
        <path d="M3.500 17A10 9.800 0 1 1 9 21.500L1.800 21.700z" />
        <path d="M3.500 8.500 12.500 15 21.500 8.500" />
      </g>
    ),
  },
  {
    label: "PowerPoint",
    mark: "running",
    icon: (
      <>
        <circle cx="13.500" cy="12" r="11" fill="#d9502f" />
        <path d="M13.500 1a11 11 0 0 1 11 11h-11z" fill="#f0957b" />
        <rect x="0" y="5.5" width="12.500" height="12.500" rx="1.5" fill="#b8301a" />
        <path d="M4.500 15V8.500h2.300a2 2 0 0 1 0 4.200H4.500" fill="none" stroke="#fff" strokeWidth="1.6" />
      </>
    ),
  },
  {
    label: "1С:Предприятие",
    mark: "active",
    icon: (
      <>
        <circle cx="12" cy="12" r="12" fill="#fbd93a" />
        <g fill="none" stroke="#cf3f1c" strokeWidth="1.7">
          <path d="M3.500 9.500 6 8v8.500M7.500 7.500v9" />
          <path d="M17 10a4 4 0 1 0-3.500 6H21" />
          <path d="M15 11a2 2 0 1 0-1.500 2.800H21" strokeWidth="1.2" />
        </g>
      </>
    ),
  },
];

const Taskbar = () => (
  <footer className="grid h-[47px] shrink-0 grid-cols-[1fr_auto_1fr] bg-[#292a28] font-['Open_Sans','Noto_Sans',sans-serif] text-[11px] leading-4 text-[#ededed]">
    <button type="button" className="flex items-center gap-[9px] pl-[17px] text-left text-xs leading-4">
      <span className="size-[22px] rounded-full bg-linear-to-br from-[#f6b83a] to-[#ea6a1c]" />
      <span>
        26°C
        <br />
        <span className="text-[#c6c6c6]">Солнечно</span>
      </span>
    </button>
    <nav aria-label="Приложения" className="flex pr-0.5">
      {apps.map(({ label, icon, mark }) => (
        <button
          key={label}
          type="button"
          aria-label={label}
          className={`relative my-1 flex w-[45px] items-center justify-center rounded-md ${mark === "active" ? "bg-[#343533]" : ""}`}
        >
          <svg viewBox="0 0 25 24" className="size-6">
            {icon}
          </svg>
          {mark === "running" && <span className="absolute bottom-0 h-[3px] w-1.5 rounded-full bg-[#9c9c9c]" />}
          {mark === "active" && <span className="absolute bottom-0 h-[3px] w-4 rounded-full bg-[#5fb5e6]" />}
        </button>
      ))}
    </nav>
    <div className="flex items-center justify-end pr-5">
      <svg viewBox="0 0 12 8" className="h-2 w-3" fill="none" stroke="currentColor" strokeWidth="1.7">
        <path d="m1 6.500 5-5 5 5" />
      </svg>
      <svg viewBox="0 0 16 16" className="ml-[19px] size-4">
        <path d="M1 2.500 4 1h12l-1 10-4 4H1z" fill="#dff2f3" />
        <path d="M1 4h10L6 8l-1 7H1z" fill="#49bccb" />
        <path d="M6 15C6 9 9 5 15 2c0 7-3 12-9 13z" fill="#fff" />
        <path d="M6.500 14.500C8 10 10 7 13.500 4.500" stroke="#49bccb" fill="none" />
      </svg>
      <span className="ml-[18px] text-base font-extrabold text-[#c4c4c4]">B</span>
      <svg viewBox="0 0 12 16" className="ml-[22px] h-4 w-3" fill="none" stroke="#79c4d8" strokeWidth="1.4">
        <rect x="3.7" y="0.8" width="4.6" height="9" rx="2.3" fill="#3f8ba0" />
        <path d="M1 7v1a5 5 0 0 0 10 0V7M6 13v3" />
      </svg>
      <span className="ml-[22px]">РУС</span>
      <svg viewBox="0 0 18 17" className="ml-[19px] h-[17px] w-[18px]" fill="none" stroke="currentColor" strokeWidth="1.6">
        <path d="M11 2H1.500v10.500h13V9M5 15.500h7" />
        <path d="M12.500 1.500h4v4h-4zM14.500 5.500V9" />
      </svg>
      <svg viewBox="0 0 18 16" className="ml-[7px] h-4 w-[18px]" fill="none" stroke="currentColor" strokeWidth="1.4">
        <path d="M1 5.500h3L8 2v12L4 10.500H1z" />
        <path d="M10.500 5.500c1.300 1.500 1.300 3.500 0 5M12.700 3.500c2.300 2.600 2.300 6.400 0 9M15 1.800c3 3.600 3 8.800 0 12.400" />
      </svg>
      <span className="ml-[17px] text-right">
        11:26
        <br />
        28.05.2025
      </span>
      <svg viewBox="0 0 15 17" className="ml-2 h-[17px] w-[15px]" fill="currentColor">
        <path d="M0 13.500c1.500-1 1.500-2.500 1.500-6C1.500 4 4 1.500 7 1.500c1 0 1.500.2 2 .5v5h3.700c0 4 .3 5.500 1.300 6.500z" />
        <path d="M4.500 14.500h5c-.5 2.200-4.500 2.200-5 0z" />
        <path d="M10.500 1.500h3.500l-3.500 4h3.500" fill="none" stroke="currentColor" strokeWidth="1.2" />
        <path d="M4.500 6h3.500L4.500 10.500h3.500" fill="none" stroke="#292a28" strokeWidth="1.1" />
      </svg>
    </div>
  </footer>
);

export default function App() {
  return (
    <div className="flex h-screen bg-black px-24 py-[53px] font-['Liberation_Sans',Arial,sans-serif]">
      <div className="flex min-w-0 flex-1 flex-col">
        <TitleBar />
        <div className="flex min-h-0 flex-1">
          <Sidebar />
          <Workspace />
        </div>
        <Taskbar />
      </div>
    </div>
  );
}
